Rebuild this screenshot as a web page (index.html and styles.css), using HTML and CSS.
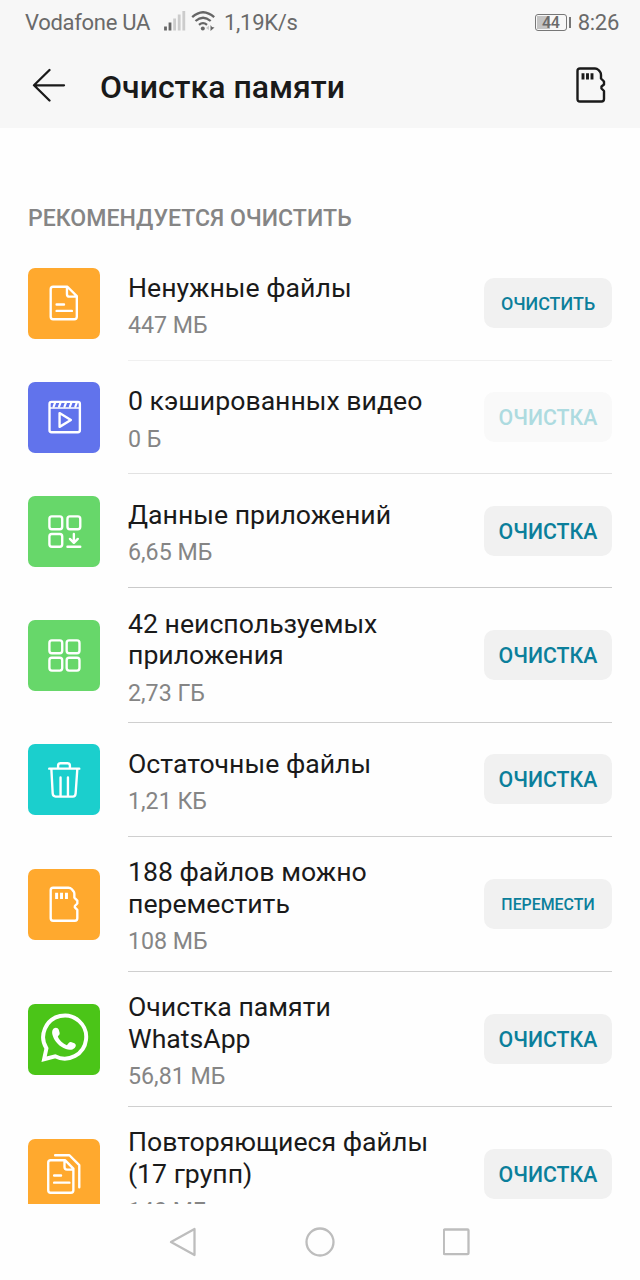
FILE: index.html
```html
<!DOCTYPE html>
<html lang="ru">

<head>
  <meta charset="UTF-8" />
  <meta name="viewport" content="width=device-width, initial-scale=1.0" />
  <title>Очистка памяти</title>
  <link rel="stylesheet" href="styles.css">
</head>

<body>
  <div class="phone">
    <header class="top">
      <div class="status">
        <span class="carrier">Vodafone UA</span>
        <svg class="signal" width="22" height="20" viewBox="0 0 22 20">
          <path d="M1.5 15.5v4M6 11.5v8" stroke="#666" stroke-width="2.8" />
          <path d="M10.6 7.5v12M15.2 3.5v16M19.8 0v19.5" stroke="#ccc" stroke-width="2.8" />
        </svg>
        <svg class="wifi" width="25" height="20" viewBox="0 0 25 20" fill="none" stroke="#666" stroke-width="2.3">
          <path d="M1.2 6.2Q12 -3.8 23.2 6.2M4.5 10Q12 3.4 19.7 10M8 13.8Q12 10.4 16 13.8" />
          <circle cx="11.8" cy="17.4" r="2" fill="#666" stroke="none" />
          <path d="M15 17l3-2.500v4.500z" fill="#ccc" stroke="none" />
          <path d="M19.500 14v6l4-3.500-2.500-.5z" fill="#666" stroke="none" />
        </svg>
        <span class="speed">1,19K/s</span>
        <span class="battery"><i class="level"></i><b>44</b></span>
        <span class="tip"></span>
        <span class="time">8:26</span>
      </div>
      <div class="bar">
        <svg class="back" width="34" height="34" viewBox="0 0 34 34" fill="none" stroke="#1a1a1a" stroke-width="2.300" stroke-linecap="round" stroke-linejoin="round">
          <path d="M17.500 2L2 17.300L17.500 32.500M2 17.300H32" />
        </svg>
        <h1>Очистка памяти</h1>
        <svg class="card" width="30" height="36" viewBox="0 0 30 36" fill="none" stroke="#1a1a1a" stroke-width="2.400" stroke-linejoin="round">
          <path d="M4 1.500H19Q21 1.500 22.500 3L24 4.800Q25 6 25 8V11.500L28 14.500V17.500L25.500 19.500V21.500L28 24V32Q28 34.500 25.500 34.500H4Q1.500 34.500 1.500 32V4Q1.500 1.500 4 1.500Z" />
          <path d="M7 6.300v6.200M11.500 6.300v6.200M16 6.300v6.200" stroke-width="2.900" />
        </svg>
      </div>
    </header>

    <main>
      <h2>РЕКОМЕНДУЕТСЯ ОЧИСТИТЬ</h2>
      <ul class="list">
        <li class="row">
          <div class="icon orange">
            <svg width="72" height="71" viewBox="0 0 72 72">
              <path d="M25 19H39.500L49 28.500V49.500Q49 52 46.500 52H25Q22.500 52 22.500 49.500V21.500Q22.500 19 25 19ZM39 19.500V26.500Q39 29 41.500 29H48.500M28.500 37H36M28.500 43.500H44" />
            </svg>
          </div>
          <div class="body line-1">
            <div class="text">
              <p class="name">Ненужные файлы</p>
              <p class="size">447 МБ</p>
            </div>
            <button class="small">ОЧИСТИТЬ</button>
          </div>
        </li>
        <li class="row">
          <div class="icon blue">
            <svg width="72" height="71" viewBox="0 0 72 72">
              <rect x="21.300" y="20.200" width="30.800" height="30.800" rx="2" />
              <path d="M22 26.300H51.500" stroke-width="1.500" />
              <path d="M25.500 25l1.500-4M31 25l1.500-4M36.500 25l1.500-4M42 25l1.500-4M47.500 25l1.500-4" stroke-width="2.200" />
              <path d="M31.500 31.500L43 38.500L31.500 45.500Z" />
            </svg>
          </div>
          <div class="body line-2">
            <div class="text">
              <p class="name">0 кэшированных видео</p>
              <p class="size">0 Б</p>
            </div>
            <button disabled>ОЧИСТКА</button>
          </div>
        </li>
        <li class="row">
          <div class="icon green">
            <svg width="72" height="71" viewBox="0 0 72 72">
              <rect x="21.200" y="20.700" width="13" height="13" rx="2.500" />
              <rect x="39.500" y="20.700" width="13" height="13" rx="2.500" />
              <rect x="21.200" y="38.500" width="13" height="13" rx="2.500" />
              <path d="M46 38.500V46.500M42 43.500L46 47.500L50 43.500M39.500 51.500H52.500" />
            </svg>
          </div>
          <div class="body line-3">
            <div class="text">
              <p class="name">Данные приложений</p>
              <p class="size">6,65 МБ</p>
            </div>
            <button>ОЧИСТКА</button>
          </div>
        </li>
        <li class="row double">
          <div class="icon green">
            <svg width="72" height="71" viewBox="0 0 72 72">
              <rect x="21.200" y="20.700" width="13" height="13" rx="2.500" />
              <rect x="38.700" y="20.700" width="13" height="13" rx="2.500" />
              <rect x="21.200" y="38.300" width="13" height="13" rx="2.500" />
              <rect x="38.700" y="38.300" width="13" height="13" rx="2.500" />
            </svg>
          </div>
          <div class="body">
            <div class="text">
              <p class="name">42 неиспользуемых<br>приложения</p>
              <p class="size">2,73 ГБ</p>
            </div>
            <button>ОЧИСТКА</button>
          </div>
        </li>
        <li class="row">
          <div class="icon cyan">
            <svg width="72" height="71" viewBox="0 0 72 72">
              <path d="M21 25H51.500M30 24.500V22Q30 19.500 32.500 19.500H39.500Q42 19.500 42 22V24.500M23.200 25.500L24.500 50Q24.700 53.300 27.500 53.300H45Q47.500 53.300 47.800 50L49.500 25.500M32.500 34V52M40 34V52" />
            </svg>
          </div>
          <div class="body">
            <div class="text">
              <p class="name">Остаточные файлы</p>
              <p class="size">1,21 КБ</p>
            </div>
            <button>ОЧИСТКА</button>
          </div>
        </li>
        <li class="row double">
          <div class="icon orange">
            <svg width="72" height="71" viewBox="0 0 72 72">
              <path d="M25 19H40.500Q42.500 19 44 20.500L45.500 22.500Q46.500 23.500 46.500 25V29L49.500 32V35L47 37.500V39L49.500 41.500V50Q49.500 52.500 47 52.500H25Q22.500 52.500 22.500 50V21.500Q22.500 19 25 19Z" />
              <path class="pins" d="M28.500 24v6.500M33.500 24v6.500M38.500 24v6.500" />
            </svg>
          </div>
          <div class="body">
            <div class="text">
              <p class="name">188 файлов можно<br>переместить</p>
              <p class="size">108 МБ</p>
            </div>
            <button class="smaller">ПЕРЕМЕСТИ</button>
          </div>
        </li>
        <li class="row double">
          <div class="icon whatsapp">
            <svg width="72" height="71" viewBox="0 0 72 72">
              <path class="bubble" d="M15.800 56L18.200 45A21.800 21.800 0 1 1 27 53Z" />
              <path class="solid" d="M25.500 24.800C27.500 23.300 30 24 30.700 26L31.600 29.500C31.900 31.300 30.300 32.200 29.700 33C31.200 36.800 35 40.300 38.900 41.800L41 39.300C41.800 38.400 42.700 38.300 43.700 38.700L46.600 39.700C48.600 40.700 48.300 43 46.800 44.600C44.300 47 41 46.800 37.900 45.700C31.500 43.400 26.700 38.400 24.700 32.500C23.700 29.700 23.500 26.600 25.500 24.800Z" />
            </svg>
          </div>
          <div class="body">
            <div class="text">
              <p class="name">Очистка памяти<br>WhatsApp</p>
              <p class="size">56,81 МБ</p>
            </div>
            <button>ОЧИСТКА</button>
          </div>
        </li>
        <li class="row double">
          <div class="icon orange">
            <svg width="72" height="71" viewBox="0 0 72 72">
              <path d="M22.500 21.500H37L45.500 30V52Q45.500 54.500 43 54.500H22.500Q20 54.500 20 52V24Q20 21.500 22.500 21.500ZM36.500 22V28.500Q36.500 31 39 31H45M26 37H33M26 44.300H41.500M27 16.500H41.500L51.500 26.500V49" />
            </svg>
          </div>
          <div class="body">
            <div class="text">
              <p class="name">Повторяющиеся файлы<br>(17 групп)</p>
              <p class="size">140 МБ</p>
            </div>
            <button>ОЧИСТКА</button>
          </div>
        </li>
      </ul>
    </main>

    <nav class="nav">
      <svg width="28" height="30" viewBox="0 0 28 30">
        <path d="M25.500 2V28L2 15Z" />
      </svg>
      <svg width="30" height="30" viewBox="0 0 30 30">
        <circle cx="15" cy="15" r="13.500" />
      </svg>
      <svg width="28" height="30" viewBox="0 0 28 30">
        <rect x="0.800" y="2.500" width="24.700" height="24.700" rx="1" />
      </svg>
    </nav>
  </div>
</body>

</html>
```
FILE: styles.css
```css
* {
  box-sizing: border-box;
}

body {
  margin: 0;
  font-family: Roboto, "Noto Sans", sans-serif;
  background: #fefefe;
  color: #1a1a1a;
}

h1,
h2,
p,
ul {
  margin: 0;
  padding: 0;
}

svg {
  display: block;
  flex: none;
}

.phone {
  display: flex;
  flex-direction: column;
  width: 640px;
  height: 1280px;
  overflow: hidden;
}

.top {
  flex: none;
  height: 128px;
  background: #f7f7f7;
}

.status {
  display: flex;
  align-items: center;
  height: 44px;
  padding: 0 21px 0 25px;
  font-size: 22px;
  letter-spacing: -0.300px;
  color: #6a6a6a;
  white-space: nowrap;
}

.carrier {
  width: 139px;
}

.signal {
  margin-top: -2px;
}

.wifi {
  margin: -2px 8px 0 5px;
}

.battery {
  position: relative;
  width: 32px;
  height: 17px;
  margin-left: auto;
  border: 1px solid #777;
  border-radius: 3px;
  font-size: 16px;
  line-height: 16px;
  text-align: center;
}

.battery b {
  position: relative;
  font-weight: 500;
}

.level {
  position: absolute;
  left: 1px;
  top: 1px;
  width: 13px;
  height: 13px;
  background: #c4c4c4;
}

.tip {
  width: 2px;
  height: 11px;
  margin: 0 7px 0 2px;
  background: #777;
}

.bar {
  display: flex;
  align-items: center;
  height: 82px;
  padding: 0 34px 0 32px;
}

.bar h1 {
  flex: 1;
  margin-left: 34px;
  padding-top: 3px;
  font-size: 32px;
  font-weight: 500;
  line-height: 38px;
}

main {
  flex: none;
  height: 1076px;
  padding: 76px 28px 0;
  overflow: hidden;
}

h2 {
  height: 43px;
  padding-top: 1px;
  font-size: 23.100px;
  font-weight: 500;
  line-height: 27px;
  color: #858585;
}

.list {
  list-style: none;
}

.row {
  display: flex;
  align-items: center;
  height: 113.700px;
}

.double {
  height: 135px;
}

.icon {
  width: 72px;
  height: 71px;
  margin-right: 28px;
  border-radius: 7px;
}

.icon svg {
  fill: none;
  stroke: #fff;
  stroke-width: 2.400;
  stroke-linecap: round;
  stroke-linejoin: round;
}

.icon .pins {
  stroke-width: 3;
  stroke-linecap: butt;
}

.icon .bubble {
  stroke-width: 4;
  stroke-linejoin: miter;
}

.icon .solid {
  fill: #fff;
  stroke: none;
}

.orange {
  background: #ffa92e;
}

.blue {
  background: #6173ec;
}

.green {
  background: #67d76a;
}

.cyan {
  background: #1bcfcd;
}

.whatsapp {
  background: #4bc518;
}

.body {
  display: flex;
  flex: 1;
  align-items: center;
  height: 100%;
  border-bottom: 1px solid #cfcfcf;
}

.line-1 {
  border-color: #f0f0f0;
}

.line-2 {
  border-color: #e2e2e2;
}

.line-3 {
  border-color: #cacaca;
}

.text {
  flex: 1;
  padding-top: 5px;
  white-space: nowrap;
}

.name {
  font-size: 26.650px;
  line-height: 31.500px;
}

.size {
  margin-top: 8px;
  font-size: 23.200px;
  line-height: 27px;
  color: #858585;
}

button {
  width: 128px;
  height: 50px;
  padding: 1px 0 0;
  border: none;
  border-radius: 10px;
  background: #f1f1f1;
  font-family: inherit;
  font-size: 21.300px;
  font-weight: 500;
  color: #0b7f9b;
}

button:disabled {
  background: #f9f9f9;
  color: #addbe0;
}

.small {
  font-size: 17.900px;
}

.smaller {
  font-size: 15.900px;
}

.nav {
  display: flex;
  flex: 1;
  justify-content: center;
  gap: 108px;
  padding: 23px 0 0;
}

.nav svg {
  fill: none;
  stroke: #bdbdbd;
  stroke-width: 2.300;
  stroke-linejoin: round;
}
```
